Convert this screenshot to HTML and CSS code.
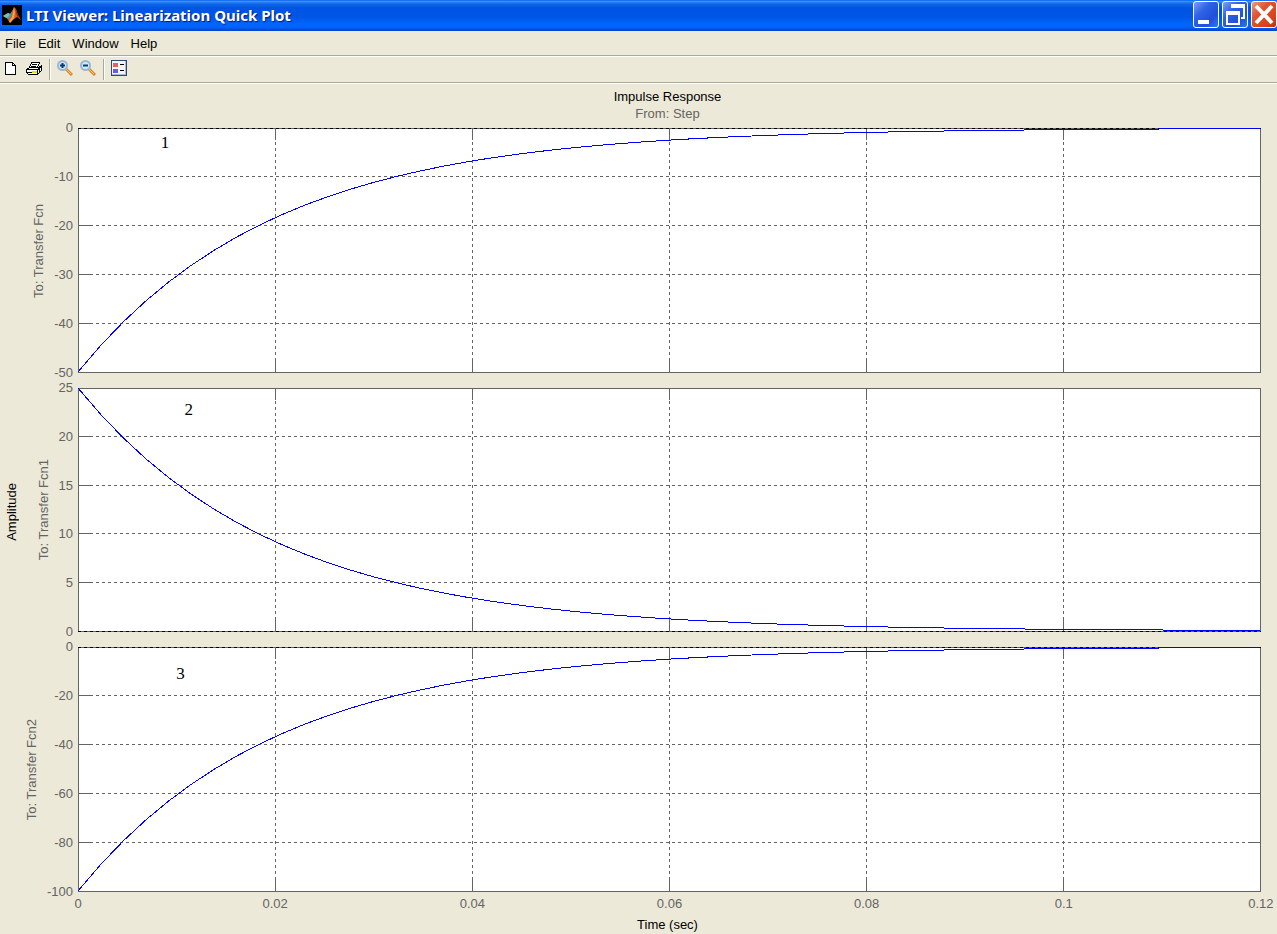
FILE: index.html
```html
<!DOCTYPE html>
<html lang="en">
<head>
    <meta charset="UTF-8">
    <meta name="viewport" content="width=device-width, initial-scale=1.0">
    <title>LTI Viewer: Linearization Quick Plot</title>
    <link rel="stylesheet" href="styles.css">
</head>
<body>
    <header class="titlebar">
        <svg class="logo" width="20" height="20" viewBox="0 0 20 20" aria-hidden="true">
            <rect width="20" height="20" fill="#000"/>
            <path d="M1 11 L6 8 L8 9 L12 3 L10 12 L6 15 L4 12 Z" fill="#4a9aa8"/>
            <path d="M1 11 L6 8 L8 9 L6 12 L4 13 Z" fill="#75c0c4"/>
            <path d="M12 2 L14 4 L16 10 L19 15 L15 12 L12 14 L8 18 L6 15 L9 11 Z" fill="#d4561c"/>
            <path d="M12 2 L13 8 L12 13 L8 18 L7 16 L10 12 Z" fill="#f5a54a"/>
            <path d="M13 3 L16 10 L19 15 L15 11 Z" fill="#8c2110"/>
        </svg>
        <h1>LTI Viewer: Linearization Quick Plot</h1>
        <div class="window-buttons">
            <button type="button" aria-label="Minimize">
                <svg width="26" height="26" viewBox="0 0 26 26"><rect x="5" y="18" width="11" height="4" fill="#fff"/></svg>
            </button>
            <button type="button" aria-label="Restore">
                <svg width="26" height="26" viewBox="0 0 26 26">
                    <path d="M9 6 V2 H23 V17 H19 V15 H21 V6 Z" fill="#fff"/>
                    <path d="M4 9 H18 V23 H4 Z M6 13 V21 H16 V13 Z" fill="#fff" fill-rule="evenodd"/>
                </svg>
            </button>
            <button type="button" class="close" aria-label="Close">
                <svg width="26" height="26" viewBox="0 0 26 26"><path d="M5 4 L21 21 M21 4 L5 21" stroke="#fff" stroke-width="4"/></svg>
            </button>
        </div>
    </header>

    <nav class="menubar">
        <button type="button">File</button>
        <button type="button">Edit</button>
        <button type="button">Window</button>
        <button type="button">Help</button>
    </nav>

    <div class="toolbar">
        <button type="button" aria-label="New">
            <svg width="16" height="16" viewBox="0 0 16 16" shape-rendering="crispEdges">
                <path d="M2.5 2.5 H9.5 L12.5 5.5 V14.5 H2.5 Z" fill="#fff" stroke="#000"/>
                <path d="M9.5 2.5 V5.5 H12.5" fill="none" stroke="#000"/>
            </svg>
        </button>
        <button type="button" aria-label="Print">
            <svg width="16" height="16" viewBox="0 0 16 16" shape-rendering="crispEdges">
                <path d="M5.5 2.5 H13.5 L11.5 7.5 H3.5 Z" fill="#fff" stroke="#000"/>
                <path d="M6 4.5 H11 M5 6.5 H10" stroke="#000"/>
                <path d="M0.5 9.5 L3.5 7.5 H12.5 L15.5 5.5 V10.5 L11.5 14.5 H2.5 L0.5 12.5 Z" fill="#fff" stroke="#000"/>
                <path d="M1 9.5 H12 L15 6.5 M1 12.5 H11 M11.5 10 V14 M13.5 9 V13" fill="none" stroke="#000"/>
                <path d="M6 11.5 H11" stroke="#e8e000" stroke-width="2"/>
            </svg>
        </button>
        <span class="separator"></span>
        <button type="button" aria-label="Zoom in">
            <svg width="16" height="16" viewBox="0 0 16 16">
                <path d="M9 9 L15 15" stroke="#d98a2b" stroke-width="3"/>
                <path d="M9 9 L14 14" stroke="#f7c36b"/>
                <circle cx="5.5" cy="5.5" r="4.5" fill="#c9effa" stroke="#9db4d6" stroke-width="2"/>
                <path d="M3 5.5 H8 M5.5 3 V8" stroke="#0c3878" stroke-width="2"/>
            </svg>
        </button>
        <button type="button" aria-label="Zoom out">
            <svg width="16" height="16" viewBox="0 0 16 16">
                <path d="M9 9 L15 15" stroke="#d98a2b" stroke-width="3"/>
                <path d="M9 9 L14 14" stroke="#f7c36b"/>
                <circle cx="5.5" cy="5.5" r="4.5" fill="#c9effa" stroke="#9db4d6" stroke-width="2"/>
                <path d="M3 5.5 H8" stroke="#0c3878" stroke-width="2"/>
            </svg>
        </button>
        <span class="separator"></span>
        <button type="button" aria-label="Legend">
            <svg width="16" height="16" viewBox="0 0 16 16" shape-rendering="crispEdges">
                <rect x="0.5" y="0.5" width="15" height="15" fill="#f2f5fc" stroke="#33476f"/>
                <path d="M1 14.5 H15 M14.5 1 V15" stroke="#a9b8d6"/>
                <rect x="2" y="3" width="5" height="4" fill="#e26060"/>
                <rect x="2" y="9" width="5" height="4" fill="#6060e2"/>
                <path d="M9 4.5 H13 M9 10.5 H13" stroke="#000"/>
            </svg>
        </button>
    </div>

    <main class="figure">
        <div class="headings">
            <h2>Impulse Response</h2>
            <p>From: Step</p>
        </div>

        <div class="y-title"><span class="vertical">Amplitude</span></div>

        <div class="rows">
            <section class="row">
                <div class="side">
                    <span class="vertical">To: Transfer Fcn</span>
                    <div class="y-ticks">
                        <span>0</span><span>-10</span><span>-20</span><span>-30</span><span>-40</span><span>-50</span>
                    </div>
                </div>
                <div class="plot" data-start="-50" data-min="-50" data-max="0" data-step="10">
                    <svg></svg>
                    <span class="note note-1">1</span>
                </div>
            </section>
            <section class="row">
                <div class="side">
                    <span class="vertical">To: Transfer Fcn1</span>
                    <div class="y-ticks">
                        <span>25</span><span>20</span><span>15</span><span>10</span><span>5</span><span>0</span>
                    </div>
                </div>
                <div class="plot" data-start="25" data-min="0" data-max="25" data-step="5">
                    <svg></svg>
                    <span class="note note-2">2</span>
                </div>
            </section>
            <section class="row">
                <div class="side">
                    <span class="vertical">To: Transfer Fcn2</span>
                    <div class="y-ticks">
                        <span>0</span><span>-20</span><span>-40</span><span>-60</span><span>-80</span><span>-100</span>
                    </div>
                </div>
                <div class="plot" data-start="-100" data-min="-100" data-max="0" data-step="20">
                    <svg></svg>
                    <span class="note note-3">3</span>
                </div>
            </section>
        </div>

        <div class="x-axis">
            <div class="x-ticks">
                <span>0</span><span>0.02</span><span>0.04</span><span>0.06</span><span>0.08</span><span>0.1</span><span>0.12</span>
            </div>
            <p class="x-title">Time (sec)</p>
        </div>
    </main>

    <script src="plots.js"></script>
</body>
</html>
```
FILE: styles.css
```css
* { box-sizing: border-box; }
body { margin: 0; min-height: 100vh; display: flex; flex-direction: column; background-color: #ece9d8; font-family: "Liberation Sans", Arial, sans-serif; font-size: 13px; line-height: 16px; color: #000; }
h1, h2, p { margin: 0; font-size: 13px; font-weight: normal; }
button { padding: 0; border: none; background: none; font: inherit; color: inherit; }
svg { display: block; }

/* title bar */
.titlebar { display: flex; align-items: center; height: 31px; padding-left: 2px; background: linear-gradient(#0058ee 0%, #3a93ff 4%, #1269e8 12%, #0054e3 25%, #0055e5 55%, #0066ff 78%, #0063f8 88%, #0042c8 100%); }
.logo { margin-bottom: 2px; }
.titlebar h1 { flex: 1; margin-left: 4px; padding-bottom: 2px; font-family: "Noto Sans", "Open Sans", sans-serif; font-size: 15px; font-weight: bold; line-height: 20px; color: #fff; text-shadow: 1px 1px 1px #0a1883; white-space: nowrap; }
.window-buttons { display: flex; gap: 3px; padding-bottom: 2px; }
.window-buttons button { width: 26px; height: 27px; border: 1px solid #fff; border-radius: 3px; background: linear-gradient(135deg, #7aa0f4 0%, #2f62e6 35%, #1f50d8 70%, #2a78f4 100%); }
.window-buttons button svg { margin: -1px; }
.window-buttons .close { background: linear-gradient(135deg, #f09a80 0%, #e0542f 35%, #d8431a 75%, #b83410 100%); }

/* menu and toolbar */
.menubar { display: flex; gap: 12px; height: 26px; padding: 0 5px; border-bottom: 1px solid #fff; box-shadow: inset 0 -1px #aca899; }
.toolbar { display: flex; align-items: center; gap: 7px; height: 27px; padding: 0 3px 5px; border-bottom: 1px solid #fff; box-shadow: inset 0 -1px #aca899; }
.separator { width: 1px; height: 21px; margin-top: 3px; background-color: #aca899; box-shadow: 1px 0 #fff; }

/* figure */
.figure { flex: 1; display: grid; grid-template-columns: 20px 1fr; grid-template-rows: 44px 1fr 42px; padding-right: 16px; }
.headings { grid-column: 1 / -1; padding: 5px 0 0 74px; text-align: center; }
.headings p { margin-top: 1px; color: #646464; }
.y-title { display: flex; align-items: center; padding: 4px 0 0 4px; }
.vertical { writing-mode: vertical-rl; transform: rotate(180deg); white-space: nowrap; }
.rows { display: grid; grid-template-rows: 245fr 244fr 245fr; gap: 15px; min-height: 480px; }
.row { display: grid; grid-template-columns: 58px 1fr; }
.side { display: flex; align-items: center; justify-content: flex-end; gap: 7px; padding-right: 5px; color: #646464; }
.y-ticks { align-self: stretch; display: flex; flex-direction: column; justify-content: space-between; text-align: right; line-height: 0; }
.plot { position: relative; min-width: 0; background-color: #fff; }
.plot svg { position: absolute; width: 100%; height: 100%; shape-rendering: crispEdges; }
.x-axis { grid-column: 2; padding-left: 54px; text-align: center; }
.x-ticks { display: flex; justify-content: space-between; margin-left: 4px; padding-top: 4px; color: #646464; }
.x-ticks span { display: flex; justify-content: center; width: 0; }
.x-title { margin-top: 5px; }

/* plot lines */
.frame, .grid, .tick { fill: none; stroke: #646464; }
.grid { stroke-dasharray: 3 3; }
.zero { stroke: #000; stroke-dasharray: 3 3; }
.curve { fill: none; stroke: #00f; }

/* numbers written on the plots */
.note { position: absolute; font-family: "Liberation Serif", "Times New Roman", serif; font-size: 17px; line-height: 20px; }
.note-1 { left: 7%; top: 2%; }
.note-2 { left: 9%; top: 5%; }
.note-3 { left: 8.3%; top: 7%; }
```
FILE: plots.js
```js
const SVG_NS = 'http://www.w3.org/2000/svg';
const END_TIME = 0.12;
const TIME_STEP = 0.02;
const TIME_CONSTANT = 0.02;
const SAMPLES = 52;
const TICK = 12;

function add(svg, name, className, attrs) {
    const el = document.createElementNS(SVG_NS, name);
    el.setAttribute('class', className);
    for (const key in attrs) {
        el.setAttribute(key, attrs[key]);
    }
    svg.appendChild(el);
}

function line(svg, className, x1, y1, x2, y2) {
    add(svg, 'line', className, { x1, y1, x2, y2 });
}

function drawPlot(plot) {
    const svg = plot.querySelector('svg');
    const start = Number(plot.dataset.start);
    const min = Number(plot.dataset.min);
    const max = Number(plot.dataset.max);
    const step = Number(plot.dataset.step);
    const w = plot.clientWidth - 1;
    const h = plot.clientHeight - 1;
    const toX = t => t / END_TIME * w;
    const toY = v => (max - v) / (max - min) * h;

    svg.innerHTML = '';

    for (let i = 1; i * TIME_STEP < END_TIME - 0.001; i++) {
        const x = Math.floor(toX(i * TIME_STEP)) + 0.5;
        line(svg, 'grid', x, h + 1, x, 0);
        line(svg, 'tick', x, 0, x, TICK);
        line(svg, 'tick', x, h + 1 - TICK, x, h + 1);
    }
    for (let v = min + step; v < max; v += step) {
        const y = Math.floor(toY(v)) + 0.5;
        line(svg, 'grid', 0, y, w, y);
        line(svg, 'tick', 0, y, TICK, y);
        line(svg, 'tick', w - TICK, y, w, y);
    }

    add(svg, 'rect', 'frame', { x: 0.5, y: 0.5, width: w, height: h });
    line(svg, 'zero', 0, toY(0) + 0.5, w + 1, toY(0) + 0.5);

    const points = [];
    for (let i = 0; i <= SAMPLES; i++) {
        const t = END_TIME * i / SAMPLES;
        points.push(toX(t) + ',' + toY(start * Math.exp(-t / TIME_CONSTANT)));
    }
    add(svg, 'polyline', 'curve', { points: points.join(' ') });
}

function drawAll() {
    document.querySelectorAll('.plot').forEach(drawPlot);
}

drawAll();
window.addEventListener('resize', drawAll);
```
